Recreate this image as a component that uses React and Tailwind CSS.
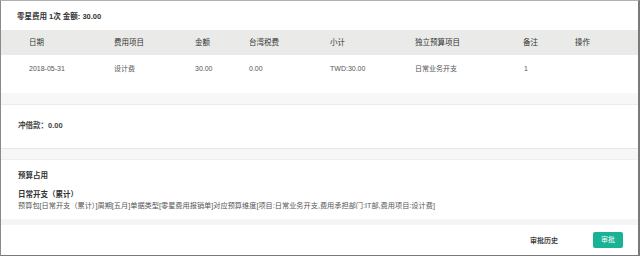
export default function App() {
  const cols = "grid grid-cols-[85px_81px_54px_81px_85px_108px_52px_1fr] pl-[28px]";
  return (
    <div
      className="w-[640px] h-[256px] bg-white border-l border-t border-b border-r-2 border-l-[#8a8a8a] border-t-[#b0b0b0] border-r-[#7a7a7a] border-b-[#7a7a7a] flex flex-col overflow-hidden text-[#333]"
      style={{ fontFamily: '"Liberation Sans", "Noto Sans CJK SC", sans-serif' }}
    >
      {/* Section 1 */}
      <div className="h-[92px] shrink-0 flex flex-col">
        <div className="h-[29px] pl-[16px] pt-[11px] text-[7.5px] leading-[10px] font-bold text-[#333]">
          零星费用 1次 金额: 30.00
        </div>
        <div className={`${cols} h-[25px] items-center bg-[#eaebe9] text-[7.5px] text-[#333]`}>
          <div>日期</div>
          <div>费用项目</div>
          <div>金额</div>
          <div>台湾税费</div>
          <div>小计</div>
          <div>独立预算项目</div>
          <div>备注</div>
          <div>操作</div>
        </div>
        <div className={`${cols} h-[28px] items-center text-[7px] text-[#555]`}>
          <div>2018-05-31</div>
          <div>设计费</div>
          <div>30.00</div>
          <div>0.00</div>
          <div>TWD:30.00</div>
          <div>日常业务开支</div>
          <div className="pl-px">1</div>
          <div></div>
        </div>
      </div>
      <div className="h-[12px] shrink-0 bg-[#f7f7f7] border-b border-[#ebebeb]"></div>

      {/* Section 2 */}
      <div className="h-[44px] shrink-0 flex items-center pl-[17px] pb-[2px] text-[7.5px] font-bold text-[#444] border-b border-[#e6e6e6]">
        冲借款：0.00
      </div>
      <div className="h-[11px] shrink-0 bg-[#f7f7f7] border-b border-[#efefef]"></div>

      {/* Section 3 */}
      <div className="h-[59px] shrink-0 flex flex-col pl-[17px] pt-[11px]">
        <div className="text-[7.5px] leading-[10px] font-bold text-[#333]">预算占用</div>
        <div className="mt-[9px] text-[7.5px] leading-[10px] font-bold text-[#333]">日常开支（累计）</div>
        <div className="text-[7.2px] leading-[11px] text-[#555]">
          预算包[日常开支（累计）]周期[五月]单据类型[零星费用报销单]对应预算维度[项目:日常业务开支,费用承担部门:IT部,费用项目:设计费]
        </div>
      </div>
      <div className="h-[6px] shrink-0 bg-[#f5f5f5]"></div>

      {/* Footer */}
      <div className="flex-1 flex items-center justify-end pr-[15px] gap-[35px]">
        <div className="text-[7px] font-bold text-[#444] pt-[2px]">审批历史</div>
        <div className="w-[30px] h-[16px] rounded-[2px] bg-[#17b394] flex items-center justify-center text-[7px] text-white">
          审批
        </div>
      </div>
    </div>
  );
}
